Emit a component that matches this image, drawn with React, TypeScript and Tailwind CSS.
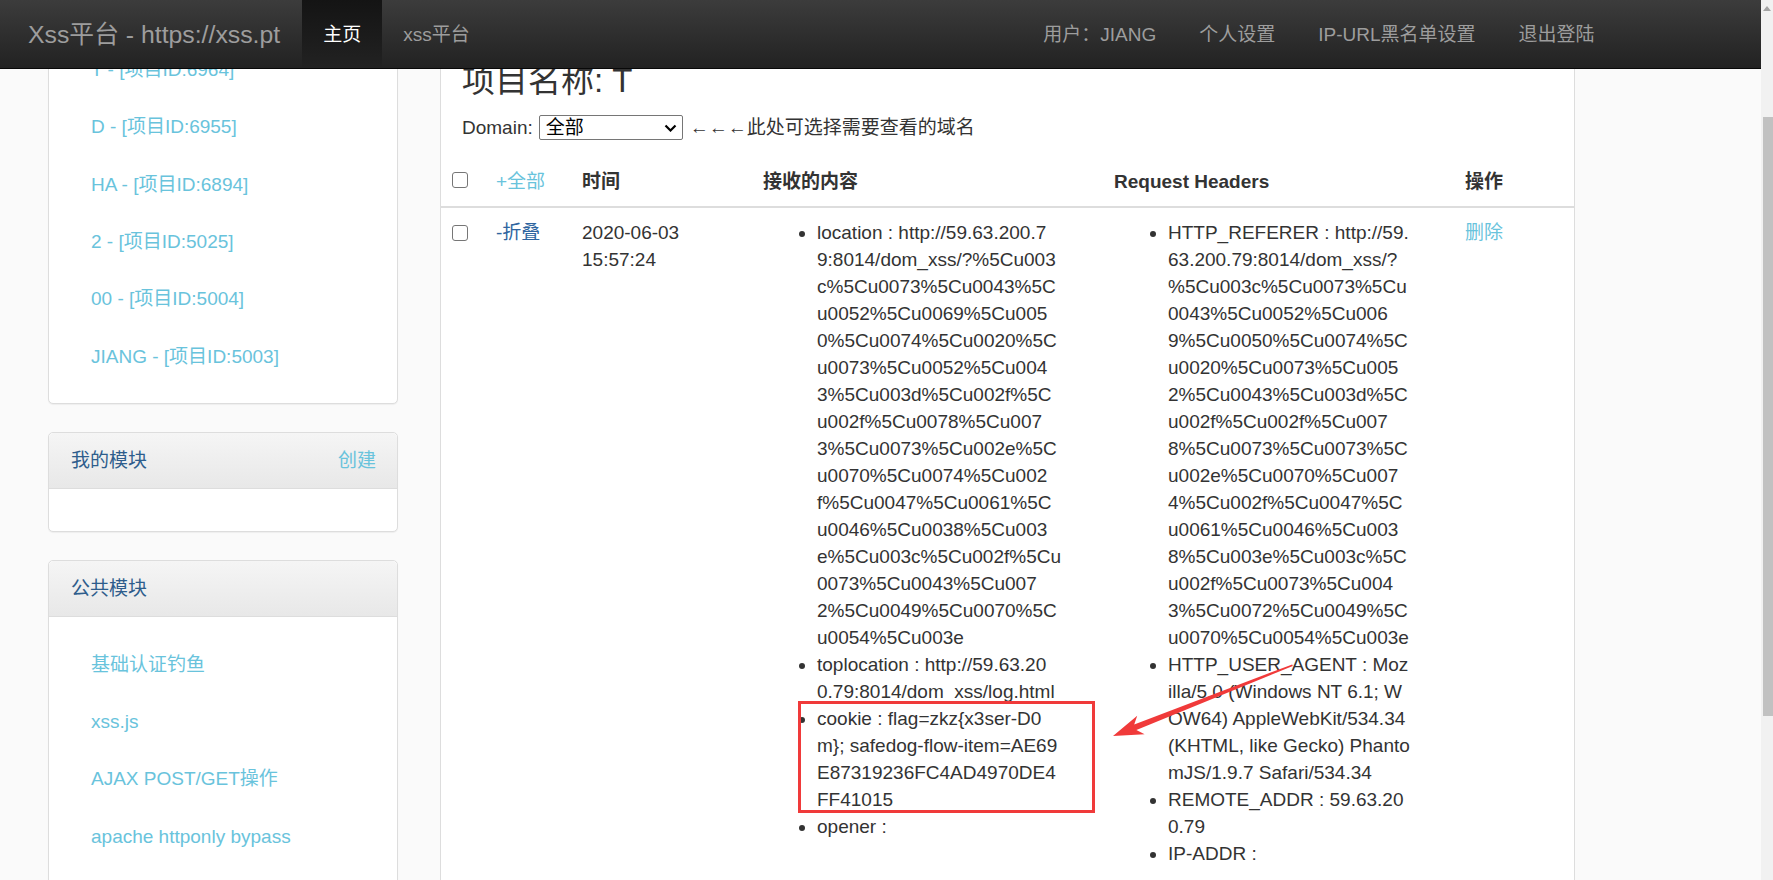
const FONT = "font-['Liberation_Sans','Noto_Sans_CJK_SC',sans-serif]";

const projects = [
  "T - [项目ID:6964]",
  "D - [项目ID:6955]",
  "HA - [项目ID:6894]",
  "2 - [项目ID:5025]",
  "00 - [项目ID:5004]",
  "JIANG - [项目ID:5003]",
];

const publicModules = [
  "基础认证钓鱼",
  "xss.js",
  "AJAX POST/GET操作",
  "apache httponly bypass",
  "获取内网IP",
];

const received = [
  {
    lines: [
      "location : http://59.63.200.7",
      "9:8014/dom_xss/?%5Cu003",
      "c%5Cu0073%5Cu0043%5C",
      "u0052%5Cu0069%5Cu005",
      "0%5Cu0074%5Cu0020%5C",
      "u0073%5Cu0052%5Cu004",
      "3%5Cu003d%5Cu002f%5C",
      "u002f%5Cu0078%5Cu007",
      "3%5Cu0073%5Cu002e%5C",
      "u0070%5Cu0074%5Cu002",
      "f%5Cu0047%5Cu0061%5C",
      "u0046%5Cu0038%5Cu003",
      "e%5Cu003c%5Cu002f%5Cu",
      "0073%5Cu0043%5Cu007",
      "2%5Cu0049%5Cu0070%5C",
      "u0054%5Cu003e",
    ],
  },
  { lines: ["toplocation : http://59.63.20", "0.79:8014/dom_xss/log.html"] },
  {
    lines: [
      "cookie : flag=zkz{x3ser-D0",
      "m}; safedog-flow-item=AE69",
      "E87319236FC4AD4970DE4",
      "FF41015",
    ],
    marked: true,
  },
  { lines: ["opener :"] },
];

const headers = [
  {
    lines: [
      "HTTP_REFERER : http://59.",
      "63.200.79:8014/dom_xss/?",
      "%5Cu003c%5Cu0073%5Cu",
      "0043%5Cu0052%5Cu006",
      "9%5Cu0050%5Cu0074%5C",
      "u0020%5Cu0073%5Cu005",
      "2%5Cu0043%5Cu003d%5C",
      "u002f%5Cu002f%5Cu007",
      "8%5Cu0073%5Cu0073%5C",
      "u002e%5Cu0070%5Cu007",
      "4%5Cu002f%5Cu0047%5C",
      "u0061%5Cu0046%5Cu003",
      "8%5Cu003e%5Cu003c%5C",
      "u002f%5Cu0073%5Cu004",
      "3%5Cu0072%5Cu0049%5C",
      "u0070%5Cu0054%5Cu003e",
    ],
  },
  {
    lines: [
      "HTTP_USER_AGENT : Moz",
      "illa/5.0 (Windows NT 6.1; W",
      "OW64) AppleWebKit/534.34",
      "(KHTML, like Gecko) Phanto",
      "mJS/1.9.7 Safari/534.34",
    ],
  },
  { lines: ["REMOTE_ADDR : 59.63.20", "0.79"] },
  { lines: ["IP-ADDR :"] },
];

type Entry = { lines: string[]; marked?: boolean };

function Checkbox({ className }: { className?: string }) {
  return (
    <span
      className={`block h-[16px] w-[16px] rounded-[3px] border border-[#767676] bg-white ${className ?? ""}`}
    />
  );
}

function EntryList({ items }: { items: Entry[] }) {
  return (
    <ul className="list-disc pl-[54px]">
      {items.map((item, i) => (
        <li key={i} className="relative whitespace-nowrap">
          {item.lines.map((line, j) => (
            <span key={j} className="block">
              {line}
            </span>
          ))}
          {item.marked && (
            <span className="pointer-events-none absolute -top-[4px] -left-[19px] h-[112px] w-[297px] border-[3px] border-[#f03a3a]" />
          )}
        </li>
      ))}
    </ul>
  );
}

function PanelHeading({ title, action }: { title: string; action?: string }) {
  return (
    <div className="flex items-center justify-between rounded-t-[5px] border-b border-[#ddd] bg-linear-to-b from-[#f5f5f5] to-[#e8e8e8] px-[22px] py-[14px] pr-[21px]">
      <span className="text-[#2e5d8c]">{title}</span>
      {action && <span className="text-[#69c3dc]">{action}</span>}
    </div>
  );
}

function LinkList({ items }: { items: string[] }) {
  return (
    <ul className="px-[20px]">
      {items.map((item) => (
        <li key={item} className="px-[22px] py-[15.15px] text-[#69c3dc]">
          {item}
        </li>
      ))}
    </ul>
  );
}

export default function App() {
  return (
    <div
      className={`relative flex h-[880px] w-full overflow-hidden bg-[#fafafa] text-[19px] leading-[27px] text-[#333] ${FONT}`}
    >
      <div className="flex min-w-0 flex-1 flex-col">
        {/* top navbar */}
        <nav className="flex h-[69px] shrink-0 items-stretch border-b border-[#080808] bg-linear-to-b from-[#3c3c3c] to-[#222] pl-[8px] text-[#9d9d9d]">
          <div className="flex items-center pr-[22px] pl-[20px] text-[24.8px]">
            Xss平台 - https://xss.pt
          </div>
          <div className="flex items-center bg-linear-to-b from-[#141414] to-[#222] px-[21px] text-white">
            主页
          </div>
          <div className="flex items-center px-[21px]">xss平台</div>
          <div className="mr-[145px] ml-auto flex items-stretch">
            <div className="flex items-center px-[21.5px]">用户：JIANG</div>
            <div className="flex items-center px-[21.5px]">个人设置</div>
            <div className="flex items-center px-[21.5px]">IP-URL黑名单设置</div>
            <div className="flex items-center px-[21.5px]">退出登陆</div>
          </div>
        </nav>

        {/* scrolled page body */}
        <div className="flex min-h-0 flex-1 items-start overflow-hidden">
          <aside className="mt-[-49px] ml-[48px] flex w-[350px] shrink-0 flex-col gap-[28px]">
            <div className="rounded-[5px] border border-[#ddd] bg-white pt-[20px] pb-[18px] shadow-[0_1px_1px_rgba(0,0,0,0.05)]">
              <LinkList items={projects} />
            </div>
            <div className="rounded-[5px] border border-[#ddd] bg-white shadow-[0_1px_1px_rgba(0,0,0,0.05)]">
              <PanelHeading title="我的模块" action="创建" />
              <div className="h-[42px]" />
            </div>
            <div className="rounded-[5px] border border-[#ddd] bg-white pb-[20px] shadow-[0_1px_1px_rgba(0,0,0,0.05)]">
              <PanelHeading title="公共模块" />
              <div className="pt-[19px]">
                <LinkList items={publicModules} />
              </div>
            </div>
          </aside>

          <main className="mt-[-7px] ml-[42px] w-[1135px] shrink-0 border border-[#ddd] bg-white pb-[60px]">
            <div className="px-[21px]">
              <h3 className="mb-[15px] text-[33px] leading-[36px]">项目名称: T</h3>
              <div className="flex h-[27px] items-center">
                <span>Domain:</span>
                <div className="ml-[6px] flex h-[25px] w-[144px] items-center justify-between rounded-[2px] border border-[#767676] bg-white pr-[5px] pl-[6px] text-black">
                  <span>全部</span>
                  <svg width="13" height="8" viewBox="0 0 13 8">
                    <polyline points="1.5,1.5 6.5,6.5 11.5,1.5" fill="none" stroke="#000" strokeWidth="2.2" />
                  </svg>
                </div>
                <span className="ml-[7px]">←←←此处可选择需要查看的域名</span>
              </div>
            </div>

            <table className="mt-[16px] w-full table-fixed border-collapse">
              <thead>
                <tr>
                  <th className="w-[44px] border-b-2 border-[#ddd] p-[11px] text-left align-top">
                    <Checkbox className="mt-[4px]" />
                  </th>
                  <th className="w-[86px] border-b-2 border-[#ddd] p-[11px] text-left align-top font-normal text-[#69c3dc]">
                    +全部
                  </th>
                  <th className="w-[181px] border-b-2 border-[#ddd] p-[11px] text-left align-top font-bold">时间</th>
                  <th className="w-[351px] border-b-2 border-[#ddd] p-[11px] text-left align-top font-bold">接收的内容</th>
                  <th className="w-[351px] border-b-2 border-[#ddd] p-[11px] text-left align-top font-bold">Request Headers</th>
                  <th className="border-b-2 border-[#ddd] p-[11px] text-left align-top font-bold">操作</th>
                </tr>
              </thead>
              <tbody>
                <tr>
                  <td className="p-[11px] align-top">
                    <Checkbox className="mt-[6px]" />
                  </td>
                  <td className="p-[11px] align-top text-[#2f65a0]">-折叠</td>
                  <td className="p-[11px] align-top">
                    2020-06-03
                    <br />
                    15:57:24
                  </td>
                  <td className="py-[11px] pl-[11px] align-top">
                    <EntryList items={received} />
                  </td>
                  <td className="py-[11px] pl-[11px] align-top">
                    <EntryList items={headers} />
                  </td>
                  <td className="p-[11px] align-top text-[#69c3dc]">删除</td>
                </tr>
              </tbody>
            </table>
          </main>
        </div>
      </div>

      {/* browser scrollbar */}
      <div className="flex w-[12px] shrink-0 flex-col bg-[#f1f1f1]">
        <div className="flex h-[17px] items-center justify-center">
          <svg width="8" height="5" viewBox="0 0 8 5">
            <polygon points="4,0 8,5 0,5" fill="#a3a3a3" />
          </svg>
        </div>
        <div className="mt-[100px] ml-[2px] h-[599px] w-[10px] bg-[#c1c1c1]" />
      </div>

      {/* annotation arrow */}
      <svg
        className="pointer-events-none absolute top-0 left-0"
        width="1773"
        height="880"
        viewBox="0 0 1773 880"
      >
        <polygon
          points="1292.8,666 1292.2,664.4 1134.2,724.4 1137.2,715.7 1113,736 1144.6,734.3 1136.4,730"
          fill="#f03a3a"
        />
      </svg>
    </div>
  );
}
